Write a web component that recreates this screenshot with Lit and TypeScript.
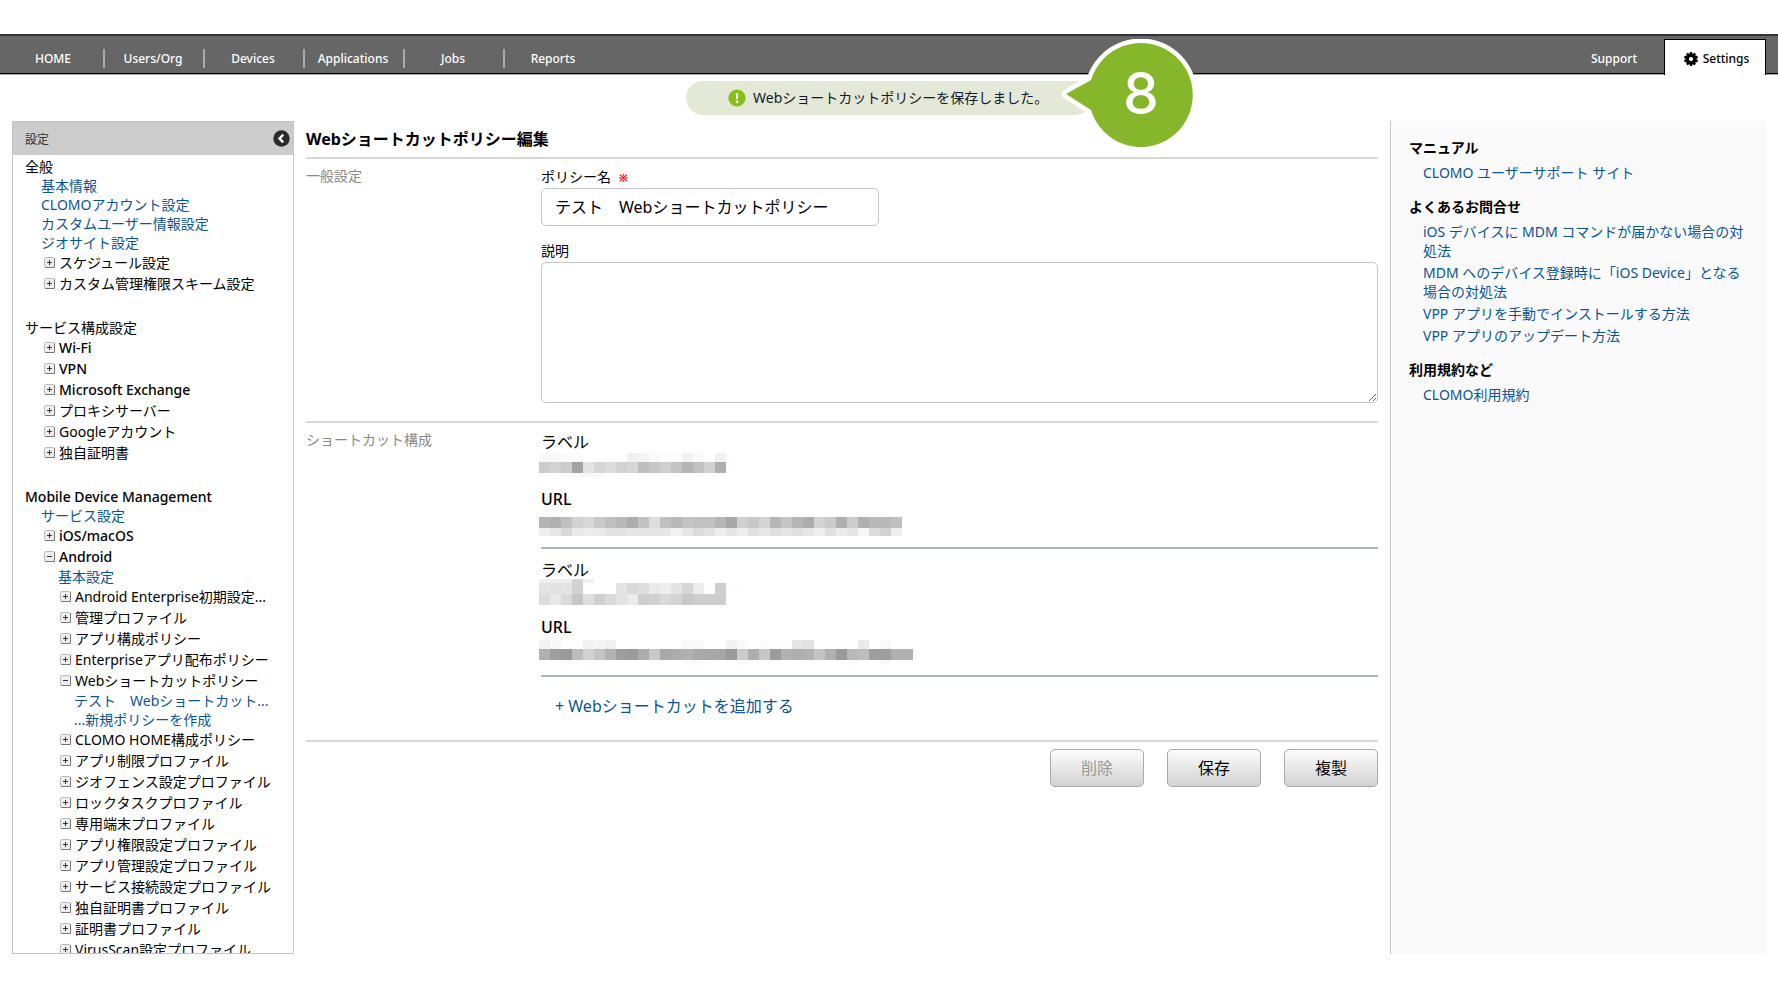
import { LitElement, html, svg, css } from "lit";
import { customElement, property } from "lit/decorators.js";

type Node = { kind: "head" | "link" | "folder"; label: string; level?: number; open?: boolean };

const head = (label: string): Node => ({ kind: "head", label });
const link = (level: number, label: string): Node => ({ kind: "link", level, label });
const folder = (level: number, label: string, open = false): Node => ({ kind: "folder", level, label, open });

const TREE: Node[] = [
  head("全般"),
  link(1, "基本情報"),
  link(1, "CLOMOアカウント設定"),
  link(1, "カスタムユーザー情報設定"),
  link(1, "ジオサイト設定"),
  folder(1, "スケジュール設定"),
  folder(1, "カスタム管理権限スキーム設定"),
  head("サービス構成設定"),
  folder(1, "Wi-Fi"),
  folder(1, "VPN"),
  folder(1, "Microsoft Exchange"),
  folder(1, "プロキシサーバー"),
  folder(1, "Googleアカウント"),
  folder(1, "独自証明書"),
  head("Mobile Device Management"),
  link(1, "サービス設定"),
  folder(1, "iOS/macOS"),
  folder(1, "Android", true),
  link(2, "基本設定"),
  folder(2, "Android Enterprise初期設定..."),
  folder(2, "管理プロファイル"),
  folder(2, "アプリ構成ポリシー"),
  folder(2, "Enterpriseアプリ配布ポリシー"),
  folder(2, "Webショートカットポリシー", true),
  link(3, "テスト　Webショートカット..."),
  link(3, "...新規ポリシーを作成"),
  folder(2, "CLOMO HOME構成ポリシー"),
  folder(2, "アプリ制限プロファイル"),
  folder(2, "ジオフェンス設定プロファイル"),
  folder(2, "ロックタスクプロファイル"),
  folder(2, "専用端末プロファイル"),
  folder(2, "アプリ権限設定プロファイル"),
  folder(2, "アプリ管理設定プロファイル"),
  folder(2, "サービス接続設定プロファイル"),
  folder(2, "独自証明書プロファイル"),
  folder(2, "証明書プロファイル"),
  folder(2, "VirusScan設定プロファイル"),
];

const langOf = (s: string) => (/^[\x20-\x7e]+$/.test(s) ? "en" : "ja");

/* One strip of a masked value: top, height, grey level of each 11px cell ("--" is empty). */
type Strip = [number, number, string];

const ITEMS: { label: Strip[]; url: Strip[] }[] = [
  {
    label: [
      [0, 9, "f8 f8 fb fb -- -- -- -- f0 f3 fa fd fd f2 f9 -- f2 fe"],
      [9, 11, "cc d2 cc a3 e4 d6 dc d2 d7 bd c6 cf c3 b4 c2 d0 ae fe"],
      [20, 4, "fb -- f9 f9 f8 f8"],
    ],
    url: [
      [7, 11, "b4 b0 bf d2 d8 c9 bf b8 ad c1 dc c0 b8 c4 c1 c1 b6 a8 d0 c8 d4 b6 c5 b6 ad d2 ca af cc b0 b9 b9 c0"],
      [18, 8, "ef e8 d8 ea ec ea e2 e2 e6 e6 e6 e6 f2 e6 dc e2 ef e6 ee e0 e8 e0 e6 e0 e6 ee e0 ec e6 f6 dc d2 ee"],
    ],
  },
  {
    label: [
      [-2, 4, "f0 ee ee d3 f0"],
      [2, 11, "e4 e2 e4 d2 fd -- -- e4 d9 de ea ee e4 d6 ec fd ce fd"],
      [13, 11, "dc e8 da c6 de ce da e2 ea ce d0 da d4 c9 ce ce ce"],
    ],
    url: [
      [2, 9, "f2 f8 -- -- f2 f4 f0 -- -- -- -- -- -- fa fa -- -- f2 fa -- fc fd fd e6 e2 -- -- -- -- ea -- f9"],
      [11, 11, "b0 9e 9a bc d2 c4 b2 9e 9a ac c8 a8 ac b0 a8 a8 a6 9a cc ae c6 9c b2 ae b2 c4 b0 9a b8 be 9e 9e b0 b0"],
      [22, 5, "-- -- fa -- fb fb -- -- -- -- -- -- -- fc fa -- -- -- fa -- -- -- -- -- -- -- -- -- fc -- -- fa"],
    ],
  },
];

const HELP = [
  { title: "マニュアル", links: ["CLOMO ユーザーサポート サイト"] },
  {
    title: "よくあるお問合せ",
    links: [
      "iOS デバイスに MDM コマンドが届かない場合の対処法",
      "MDM へのデバイス登録時に「iOS Device」となる場合の対処法",
      "VPP アプリを手動でインストールする方法",
      "VPP アプリのアップデート方法",
    ],
  },
  { title: "利用規約など", links: ["CLOMO利用規約"] },
];

const base = css`
  :host, * { box-sizing: border-box; }
  a { color: #0b5394; text-decoration: none; }
  a:hover { text-decoration: underline; }
  h1, h2, ul, p { margin: 0; padding: 0; }
  ul { list-style: none; }
  button, input, textarea { font: inherit; color: inherit; }
  svg { display: block; }
  [lang="en"] { font-weight: 500; }
`;

@customElement("top-nav")
export class TopNav extends LitElement {
  static styles = [base, css`
    :host { display: block; }
    .bar {
      display: flex; align-items: stretch; height: 40px; margin-bottom: 1px; padding: 0 12px 0 3px;
      background: #666; border-top: 2px solid #333; border-bottom: 1px solid #000;
      box-shadow: 0 1px #aaa; font-size: 12px; line-height: 20px; color: #fff;
    }
    a { color: inherit; }
    .item {
      width: 102px; margin-right: -2px; height: 19px; margin-top: 13px;
      border-right: 2px solid #aaa; text-align: center;
    }
    .item.last { border-right-color: transparent; }
    .spacer { flex: 1; }
    .tab {
      display: flex; align-items: center; justify-content: center; gap: 5px;
      width: 102px; margin: 3px 0 -2px; padding: 3px 0 0 3px; background: #fff; color: #000;
      border: 1px solid #000; border-bottom: 0;
    }
  `];
  render() {
    const items = ["HOME", "Users/Org", "Devices", "Applications", "Jobs", "Reports"];
    const teeth = [0, 36, 72, 108, 144, 180, 216, 252, 288, 324];
    return html`
      <nav class="bar" lang="en">
        ${items.map((t, i) => html`<a href="#" class="item ${i === items.length - 1 ? "last" : ""}">${t}</a>`)}
        <span class="spacer"></span>
        <a href="#" class="item last">Support</a>
        <a href="#" class="tab">
          <svg width="14" height="14" viewBox="-7 -7 14 14" aria-hidden="true">
            ${teeth.map((a) => svg`<rect x="-1.3" y="-7" width="2.6" height="4" rx="0.8" transform="rotate(${a})"></rect>`)}
            <circle r="3.9" fill="none" stroke="#000" stroke-width="3.6"></circle>
          </svg>
          <span>Settings</span>
        </a>
      </nav>`;
  }
}

@customElement("save-notice")
export class SaveNotice extends LitElement {
  static styles = [base, css`
    :host { display: flex; justify-content: center; padding: 6px 0; }
    .pill {
      position: relative; display: flex; align-items: center; gap: 7px;
      width: 406px; height: 34px; padding-left: 42px; border-radius: 17px;
      background: #e3e8d7; color: #111a2a; font-size: 14px; line-height: 20px;
    }
    .callout { position: absolute; left: 373px; top: -42px; width: 140px; height: 114px; z-index: 2; }
    .number {
      position: absolute; left: 397px; top: -43px; width: 116px; height: 112px; z-index: 3;
      color: #fff; font: 500 57px/112px "Inter", "Noto Sans", sans-serif; text-align: center;
    }
  `];
  render() {
    return html`
      <div class="pill" role="status">
        <svg width="18" height="18" viewBox="0 0 18 18" aria-hidden="true">
          <circle cx="9" cy="9" r="8.6" fill="#85c01a"></circle>
          <path d="M7.8 4h2.4l-.4 6.2H8.2z" fill="#fff"></path>
          <circle cx="9" cy="12.9" r="1.3" fill="#fff"></circle>
        </svg>
        <span>Webショートカットポリシーを保存しました。</span>
        <svg class="callout" viewBox="0 0 140 114" aria-hidden="true">
          <path d="M7 55 32 41A52 52 0 1 1 32 71Z" fill="#fff" stroke="#fff" stroke-width="9" stroke-linejoin="round"></path>
          <path d="M7 55 32 41A52 52 0 1 1 32 71Z" fill="#86b72a"></path>
        </svg>
        <span class="number">8</span>
      </div>`;
  }
}

@customElement("settings-tree")
export class SettingsTree extends LitElement {
  static styles = [base, css`
    :host {
      display: flex; flex-direction: column; border: 1px solid #c4c4c4;
      min-height: 0; overflow: hidden; font-size: 14px;
    }
    .top {
      display: flex; align-items: center; justify-content: space-between; flex: none;
      height: 33px; padding: 0 3px 0 12px; background: #ccc; color: #333; font-size: 12px;
    }
    .collapse { border: 0; padding: 0; background: none; cursor: pointer; }
    .list { flex: 1; min-height: 0; overflow-y: auto; scrollbar-width: none; padding-top: 2px; white-space: nowrap; }
    .head { height: 19px; line-height: 20px; padding-left: 12px; }
    .head:not(:first-child) { margin-top: 24px; }
    .link { height: 19px; line-height: 19px; }
    .folder { height: 21px; line-height: 21px; }
    .link.l1 { padding-left: 28px; }
    .link.l2 { padding-left: 45px; }
    .link.l3 { padding-left: 61px; }
    .folder.l1 { padding-left: 31px; }
    .folder.l2 { padding-left: 47px; }
    .toggle {
      display: flex; align-items: center; gap: 4px; border: 0; padding: 0;
      background: none; height: 21px; cursor: pointer;
    }
  `];
  private icon(open: boolean) {
    return html`<svg width="11" height="11" viewBox="0 0 11 11" aria-hidden="true">
      <rect x="0.5" y="0.5" width="10" height="10" rx="1" fill="#eee" stroke="#bbb"></rect>
      <path d="M10.5 1v9.5H1" fill="none" stroke="#777"></path>
      <path d=${open ? "M3 5.5h5" : "M3 5.5h5M5.5 3v5"} stroke="#333"></path>
    </svg>`;
  }
  render() {
    return html`
      <div class="top">
        <span>設定</span>
        <button class="collapse" aria-label="設定">
          <svg width="17" height="17" viewBox="0 0 17 17">
            <circle cx="8.5" cy="8.5" r="8.2" fill="#2b2b2b"></circle>
            <path d="M10.2 4.6 6.6 8.5l3.6 3.9" fill="none" stroke="#fff" stroke-width="2.4"></path>
          </svg>
        </button>
      </div>
      <ul class="list">
        ${TREE.map((n) =>
          n.kind === "head"
            ? html`<li class="head" lang=${langOf(n.label)}>${n.label}</li>`
            : n.kind === "link"
              ? html`<li class="link l${n.level}"><a href="#">${n.label}</a></li>`
              : html`<li class="folder l${n.level}" lang=${langOf(n.label)}>
                  <button class="toggle" aria-expanded=${n.open ? "true" : "false"}>${this.icon(!!n.open)}<span>${n.label}</span></button>
                </li>`)}
      </ul>`;
  }
}

@customElement("masked-value")
export class MaskedValue extends LitElement {
  @property({ attribute: false }) strips: Strip[] = [];
  static styles = css`
    :host { display: block; margin-left: -2px; }
    svg { display: block; overflow: visible; width: 374px; height: 100%; }
  `;
  render() {
    return html`<svg shape-rendering="crispEdges" aria-hidden="true">
      ${this.strips.map(([y, h, cells]) =>
        cells.split(" ").map((c, i) =>
          c === "--" ? null : svg`<rect x=${i * 11} y=${y} width="11" height=${h} fill="#${c}${c}${c}"></rect>`))}
    </svg>`;
  }
}

@customElement("policy-form")
export class PolicyForm extends LitElement {
  static styles = [base, css`
    :host { display: block; min-width: 0; }
    .title { font-size: 16px; font-weight: 700; line-height: 36px; }
    .section {
      display: grid; grid-template-columns: 235px minmax(0, 1fr);
      border-top: 2px solid #d6d6d6; padding-top: 8px;
    }
    .name { font-size: 14px; line-height: 18px; color: #888; font-weight: 400; }
    .field { display: flex; flex-direction: column; align-items: flex-start; gap: 1px; margin-bottom: 15px; }
    .field.tall { margin-bottom: 18px; }
    .caption { height: 20px; font-size: 14px; line-height: 20px; }
    .required { color: #f00; font-size: 11px; font-weight: 700; line-height: 11px; margin-left: 4px; }
    .text {
      width: 338px; max-width: 100%; height: 38px; padding: 0 13px 2px; font-size: 16px;
      border: 1px solid #c4c4c4; border-radius: 5px; background: #fff;
    }
    .area {
      display: block; width: 100%; height: 141px; padding: 8px 13px; font-size: 16px;
      border: 1px solid #c4c4c4; border-radius: 5px; background: #fff;
    }
    .item { border-bottom: 2px solid #a9b1bd; margin-bottom: 10px; padding-bottom: 12px; font-size: 16px; }
    .item p { height: 22px; line-height: 22px; }
    .label-mask { height: 24px; margin-bottom: 11px; }
    .url-mask { height: 25px; }
    .add { display: block; padding: 7px 14px 22px; font-size: 16px; line-height: 24px; }
    .actions { display: flex; justify-content: flex-end; gap: 23px; border-top: 2px solid #d6d6d6; padding-top: 7px; }
    .btn {
      width: 94px; height: 38px; padding: 0 0 2px; font-size: 16px; color: #000;
      border: 1px solid #aaa; border-radius: 5px; background: linear-gradient(#fdfdfd, #d2d2d2);
    }
    .btn:disabled { color: #999; }
  `];
  render() {
    return html`
      <h1 class="title">Webショートカットポリシー編集</h1>
      <section class="section">
        <h2 class="name">一般設定</h2>
        <div>
          <div class="field">
            <label class="caption" for="policy">ポリシー名 <span class="required">※</span></label>
            <input class="text" id="policy" type="text" value="テスト　Webショートカットポリシー">
          </div>
          <div class="field tall">
            <label class="caption" for="note">説明</label>
            <textarea class="area" id="note"></textarea>
          </div>
        </div>
      </section>
      <section class="section">
        <h2 class="name">ショートカット構成</h2>
        <div>
          ${ITEMS.map((it) => html`
            <div class="item">
              <p>ラベル</p>
              <masked-value class="label-mask" .strips=${it.label}></masked-value>
              <p lang="en">URL</p>
              <masked-value class="url-mask" .strips=${it.url}></masked-value>
            </div>`)}
          <a class="add" href="#">+ Webショートカットを追加する</a>
        </div>
      </section>
      <div class="actions">
        <button class="btn" disabled>削除</button>
        <button class="btn">保存</button>
        <button class="btn">複製</button>
      </div>`;
  }
}

@customElement("help-panel")
export class HelpPanel extends LitElement {
  static styles = [base, css`
    :host {
      display: block; background: #fafafa; border-left: 1px solid #c4c4c4;
      padding: 17px 16px 0 18px; font-size: 14px; line-height: 19px;
    }
    .title { font-size: 14px; font-weight: 700; line-height: 20px; }
    .links { display: flex; flex-direction: column; gap: 3px; padding: 5px 0 15px 14px; }
  `];
  render() {
    return html`${HELP.map((g) => html`
      <h2 class="title">${g.title}</h2>
      <ul class="links">${g.links.map((l) => html`<li><a href="#">${l}</a></li>`)}</ul>`)}`;
  }
}

@customElement("app-root")
export class AppRoot extends LitElement {
  static styles = [base, css`
    :host {
      display: flex; flex-direction: column; height: 100vh; padding: 34px 0 46px;
      background: #fff; color: #000; overflow: hidden;
      font-family: "Noto Sans", "Noto Sans CJK JP", sans-serif;
    }
    .body {
      flex: 1; min-height: 0; display: grid;
      grid-template-columns: 282px minmax(0, 1fr) 376px;
      grid-template-rows: minmax(0, 1fr);
      padding: 0 12px;
    }
    .form { padding: 0 12px; }
  `];
  render() {
    return html`
      <top-nav></top-nav>
      <save-notice></save-notice>
      <div class="body">
        <settings-tree></settings-tree>
        <policy-form class="form"></policy-form>
        <help-panel></help-panel>
      </div>`;
  }
}
